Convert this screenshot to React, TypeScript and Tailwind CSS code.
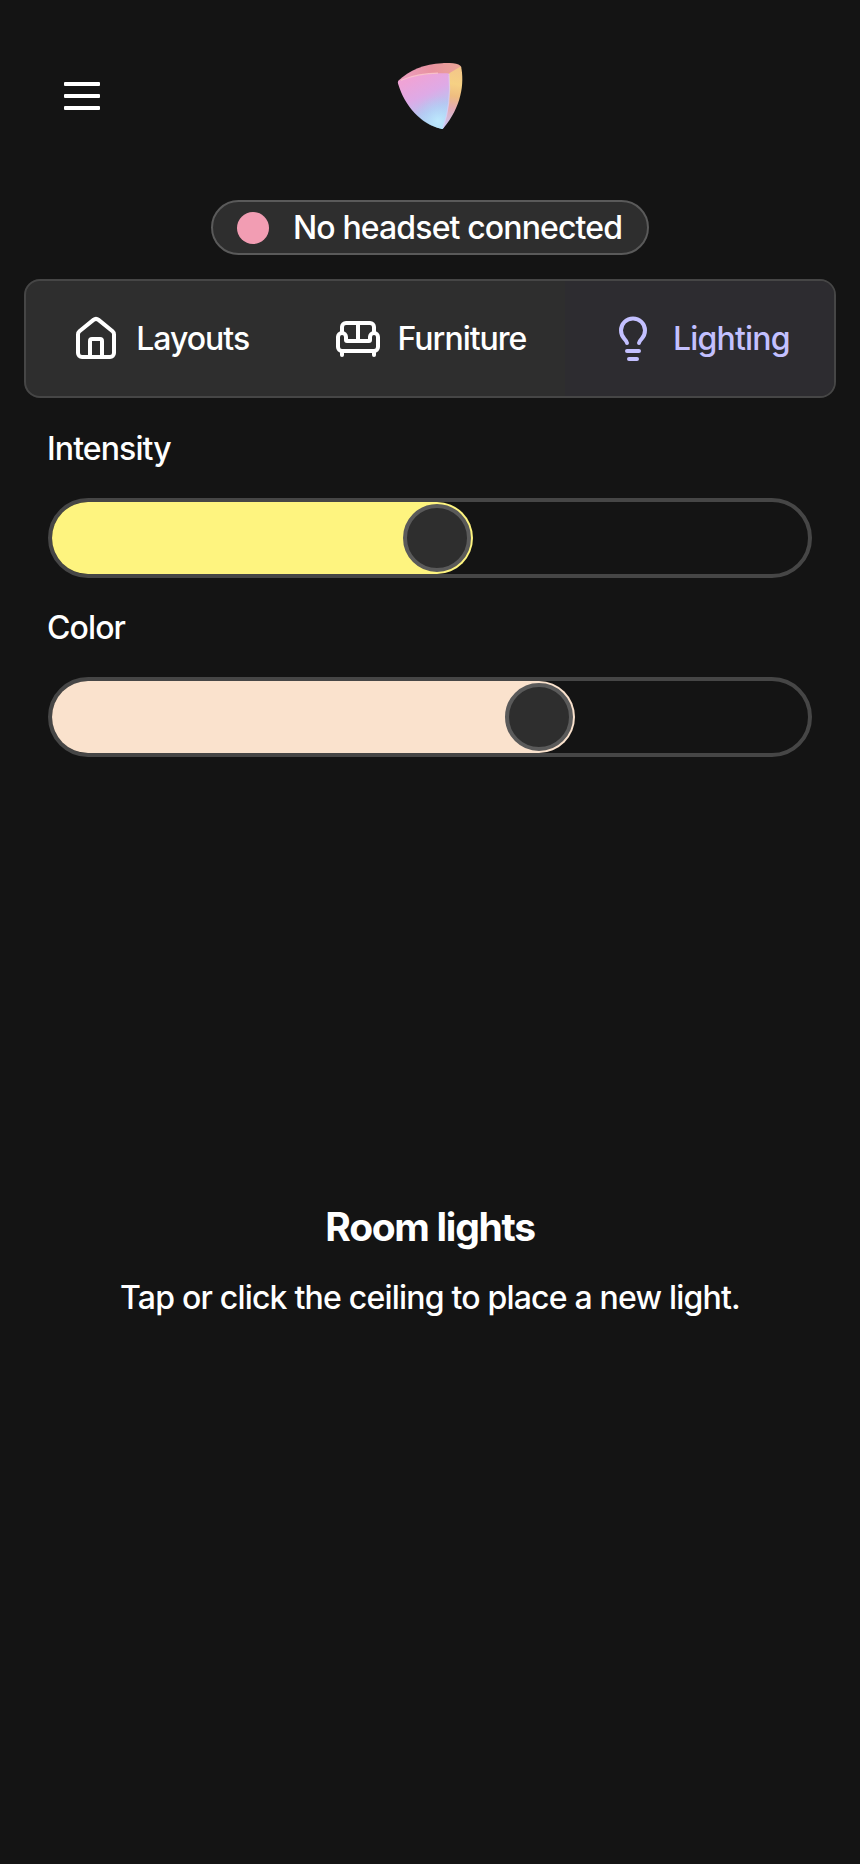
import type { ReactNode } from "react";
import { Sofa } from "lucide-react";

function Logo() {
  return (
    <svg width="100" height="90" viewBox="0 0 100 90" fill="none" aria-hidden="true">
      <defs>
        <linearGradient id="front" x1="36" y1="27" x2="60" y2="78" gradientUnits="userSpaceOnUse">
          <stop offset="0" stopColor="#efa3d6" />
          <stop offset="0.35" stopColor="#deaae6" />
          <stop offset="0.65" stopColor="#b9c4f0" />
          <stop offset="1" stopColor="#b4e0f8" />
        </linearGradient>
        <linearGradient id="top" x1="25" y1="27" x2="80" y2="16" gradientUnits="userSpaceOnUse">
          <stop offset="0" stopColor="#ec9cbc" />
          <stop offset="0.5" stopColor="#e8929f" />
          <stop offset="1" stopColor="#eba596" />
        </linearGradient>
        <linearGradient id="side" x1="78" y1="16" x2="68" y2="76" gradientUnits="userSpaceOnUse">
          <stop offset="0" stopColor="#f3c58a" />
          <stop offset="0.3" stopColor="#f6d184" />
          <stop offset="0.5" stopColor="#efbd80" />
          <stop offset="0.7" stopColor="#e5abb4" />
          <stop offset="1" stopColor="#c9c3ee" />
        </linearGradient>
        <radialGradient id="glow" cx="58" cy="71" r="25" gradientUnits="userSpaceOnUse">
          <stop stopColor="#c0eeff" stopOpacity="0.8" />
          <stop offset="1" stopColor="#9fd2f8" stopOpacity="0" />
        </radialGradient>
      </defs>
      <path d="M18 31C29 20 45 14 62 13.2C69 12.9 75 13.4 78.5 14.4Q80.8 15.3 81.3 17.5L69 25L19 33Z" fill="url(#top)" />
      <path d="M68.8 23.4L81 16.2C84.6 33 81.5 57 63.4 78.2Q62.4 79.4 61 78L66 50Z" fill="url(#side)" />
      <path d="M18.2 31.2C34 25.3 50 23 68.8 23.4C70.5 43 69 61 63 78.4Q62.2 79.2 61 78.8C41 73.5 25 57 18 33.5Q17.6 32 18.2 31.2Z" fill="url(#front)" />
      <path d="M68.8 23.4C70.5 43 69 61 63 78.4Q62.2 79.2 61 78.8C47 75.5 36 67 28 55L48 42Z" fill="url(#glow)" />
      <path d="M21 30.2C33 25.6 46 23.2 58 23.2" stroke="#fbc9d0" strokeOpacity="0.8" strokeWidth="1.2" />
      <path d="M69 24C70.6 43 69 61 63 77.8" stroke="#dccdf6" strokeOpacity="0.7" strokeWidth="1.2" />
    </svg>
  );
}

function HouseIcon() {
  return (
    <svg className="size-12 shrink-0" viewBox="0 0 48 48" fill="none" stroke="currentColor" strokeWidth="4" strokeLinejoin="round">
      <path d="M6 19.4a4 4 0 0 1 1.45-3.1L21.45 4.9a4 4 0 0 1 5.1 0l14 11.4A4 4 0 0 1 42 19.4V38a4 4 0 0 1-4 4H10a4 4 0 0 1-4-4Z" />
      <path d="M18 42V26a2 2 0 0 1 2-2h8a2 2 0 0 1 2 2v16" />
    </svg>
  );
}

function BulbIcon() {
  return (
    <svg className="size-12 shrink-0" viewBox="0 0 48 48" fill="none" stroke="currentColor" strokeWidth="4" strokeLinecap="round">
      <path d="M18 28c-.2-1.5-1-2.5-2.6-4.2a12 12 0 1 1 17.2 0C31 25.5 30.2 26.5 30 28" />
      <path d="M18 36h12M20 44h8" />
    </svg>
  );
}

function Tab({ icon, label, active = false }: { icon: ReactNode; label: string; active?: boolean }) {
  return (
    <button
      className={
        active
          ? "flex flex-1 items-center justify-center gap-4 rounded-r-[14px] bg-[#2d2c30] text-[#c3c0ff]"
          : "flex flex-1 items-center justify-center gap-4 tracking-[-1px]"
      }
    >
      {icon}
      <span className="whitespace-nowrap pt-px">{label}</span>
    </button>
  );
}

function Slider({ label, fill, width }: { label: string; fill: string; width: number }) {
  return (
    <div className="flex flex-col">
      <span className="-ml-px h-12 leading-[50px] tracking-[-0.9px]">{label}</span>
      <div className="mt-[26px] h-20 rounded-full border-4 border-[#464646]">
        <div className="flex h-full items-center justify-end rounded-full pr-0.5" style={{ width, backgroundColor: fill }}>
          <div className="size-[68px] rounded-full border-4 border-[#5a5a5a] bg-[#2e2e2e]" />
        </div>
      </div>
    </div>
  );
}

export default function App() {
  return (
    <div className="flex h-[1864px] w-[860px] flex-col bg-[#141414] px-6 font-['Inter',sans-serif] text-[32px] font-[450] leading-[48px] tracking-[-0.8px] text-white">
      <header className="grid h-[200px] grid-cols-[1fr_auto_1fr] items-start px-10 pt-[50px]">
        <button className="mt-8 flex w-9 flex-col gap-2" aria-label="Menu">
          <span className="h-1 w-9 rounded-[1px] bg-white" />
          <span className="h-1 w-9 rounded-[1px] bg-white" />
          <span className="h-1 w-9 rounded-[1px] bg-white" />
        </button>
        <Logo />
      </header>

      <div className="flex h-[55px] w-[438px] items-center gap-6 self-center rounded-full border-2 border-[#5a5a5a] bg-[#2e2e2e] pl-6">
        <span className="size-8 shrink-0 rounded-full bg-[#f29db3]" />
        <span className="whitespace-nowrap tracking-[-0.87px]">No headset connected</span>
      </div>

      <nav className="mt-6 flex h-[119px] rounded-2xl border-2 border-[#464646] bg-[#2e2e2e]">
        <Tab icon={<HouseIcon />} label="Layouts" />
        <Tab icon={<Sofa className="size-12 shrink-0" />} label="Furniture" />
        <Tab icon={<BulbIcon />} label="Lighting" active />
      </nav>

      <section className="mt-[26px] flex flex-col gap-[25px] px-6">
        <Slider label="Intensity" fill="#fef47f" width={421} />
        <Slider label="Color" fill="#fae2cd" width={523} />
      </section>

      <section className="mt-[446px] flex flex-col items-center">
        <h1 className="text-[39px] font-bold leading-[48px] tracking-[-1.3px]">Room lights</h1>
        <p className="mt-[23px]">Tap or click the ceiling to place a new light.</p>
      </section>
    </div>
  );
}
